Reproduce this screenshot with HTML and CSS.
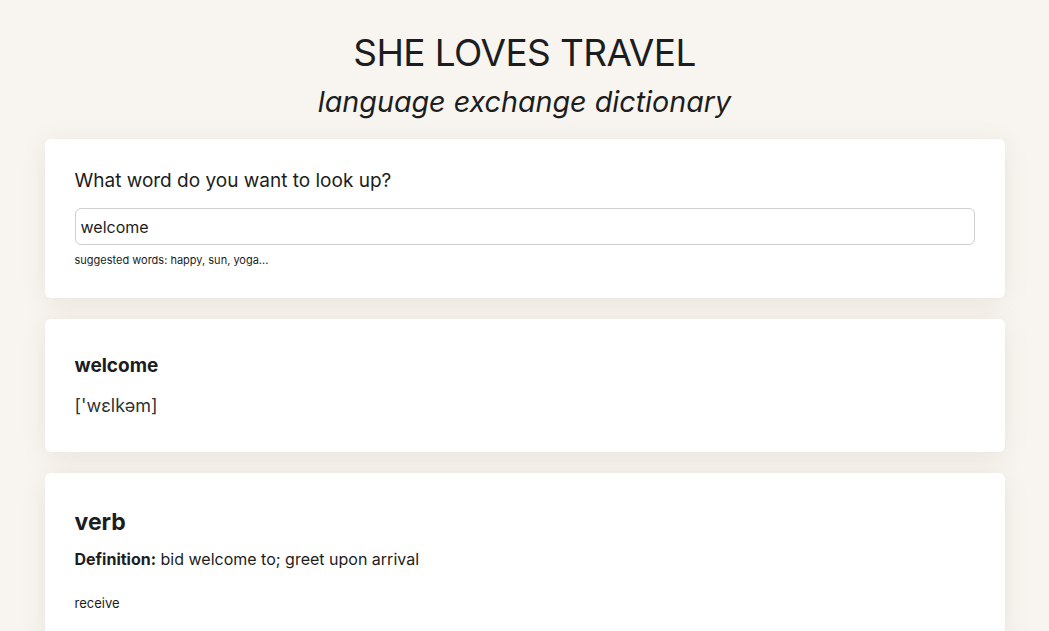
FILE: index.html
```html
<!DOCTYPE html>
<html lang="en">
<head>
<meta charset="utf-8">
<title>She Loves Travel</title>
<link rel="stylesheet" href="styles.css">
</head>
<body>
<header class="header">
  <h1 class="title">SHE LOVES TRAVEL</h1>
  <p class="subtitle">language exchange dictionary</p>
</header>
<main class="container">
  <section class="card search">
    <h2 class="search-label">What word do you want to look up?</h2>
    <input class="search-input" type="text" value="welcome">
    <p class="hint">suggested words: happy, sun, yoga...</p>
  </section>
  <section class="card">
    <h3 class="word">welcome</h3>
    <p class="phonetic">['wɛlkəm]</p>
  </section>
  <section class="card">
    <h2 class="pos">verb</h2>
    <p class="definition"><strong>Definition:</strong> bid welcome to; greet upon arrival</p>
    <p class="synonym">receive</p>
  </section>
</main>
</body>
</html>
```

FILE: styles.css
```css
* { box-sizing: border-box; }
html, body { margin: 0; padding: 0; }
body {
  background: #f8f5f0;
  color: #1c1d20;
  font-family: Inter, "Noto Sans", sans-serif;
}
.header {
  text-align: center;
  padding-top: 30px;
}
.title {
  margin: 0;
  font-size: 37px;
  font-weight: 400;
  line-height: 46px;
  letter-spacing: -0.6px;
}
.subtitle {
  margin: 6px 0 0;
  font-size: 28.7px;
  font-style: italic;
  line-height: 40px;
}
.container {
  width: 960px;
  margin: 17px auto 0;
  display: flex;
  flex-direction: column;
  gap: 21px;
}
.card {
  background: #fff;
  border-radius: 6px;
  padding: 30px;
  box-shadow: 0 4px 24px rgba(120, 100, 70, 0.12);
}
.search {
  padding-bottom: 31px;
}
.search-label {
  margin: 0 0 15px;
  font-size: 19px;
  font-weight: 400;
  line-height: 24px;
}
.search-input {
  display: block;
  width: 100%;
  height: 37px;
  border: 1px solid #cfcfcf;
  border-radius: 6px;
  padding: 0 5px;
  font: 16px Inter, "Noto Sans", sans-serif;
  color: #1c1d20;
  background: #fff;
}
.hint {
  margin: 9px 0 0;
  font-size: 11px;
  line-height: 13px;
}
.word {
  margin: 5px 0 0;
  font-size: 19px;
  font-weight: 700;
  line-height: 24px;
}
.phonetic {
  margin: 16px 0 0;
  padding-bottom: 4px;
  font-size: 18px;
  line-height: 24px;
  color: #333;
}
.pos {
  margin: 5px 0 0;
  font-size: 23px;
  font-weight: 700;
  line-height: 28px;
}
.definition {
  margin: 12px 0 0;
  font-size: 16px;
  line-height: 22px;
}
.synonym {
  margin: 24px 0 0;
  font-size: 13px;
  line-height: 18px;
}
```
